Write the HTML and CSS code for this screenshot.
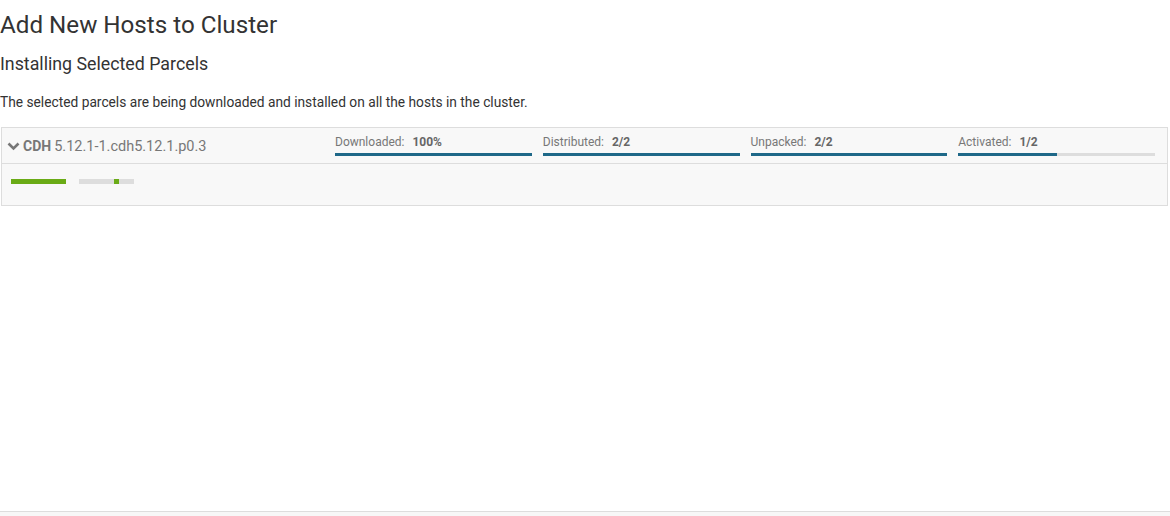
FILE: index.html
```html
<!DOCTYPE html>
<html>
<head>
<meta charset="utf-8">
<link rel="stylesheet" href="styles.css">
</head>
<body>
<div class="main">
  <h1 class="title">Add New Hosts to Cluster</h1>
  <h2 class="subtitle">Installing Selected Parcels</h2>
  <p class="desc">The selected parcels are being downloaded and installed on all the hosts in the cluster.</p>
  <div class="parcel">
    <div class="parcel-head">
      <div class="parcel-name">
        <svg class="chev" width="13" height="9" viewBox="0 0 13 9"><path d="M1.5 1.5 L6.5 6.5 L11.5 1.5" fill="none" stroke="#777" stroke-width="2.6"/></svg>
        <span class="pname">CDH</span><span class="pver">5.12.1-1.cdh5.12.1.p0.3</span>
      </div>
      <div class="stages">
        <div class="stage">
          <div class="stage-label">Downloaded:<b>100%</b></div>
          <div class="track"><div class="fill" style="width:100%"></div></div>
        </div>
        <div class="stage">
          <div class="stage-label">Distributed:<b>2/2</b></div>
          <div class="track"><div class="fill" style="width:100%"></div></div>
        </div>
        <div class="stage">
          <div class="stage-label">Unpacked:<b>2/2</b></div>
          <div class="track"><div class="fill" style="width:100%"></div></div>
        </div>
        <div class="stage">
          <div class="stage-label">Activated:<b>1/2</b></div>
          <div class="track"><div class="fill" style="width:50%"></div></div>
        </div>
      </div>
    </div>
    <div class="parcel-body">
      <div class="host-bar full"></div>
      <div class="host-bar partial"><span class="seg"></span></div>
    </div>
  </div>
</div>
<div class="footer"></div>
</body>
</html>
```
FILE: styles.css
```css
html, body {
  margin: 0;
  padding: 0;
}
body {
  font-family: Roboto, "Liberation Sans", sans-serif;
  color: #333;
  background: #fff;
}
.main {
  min-height: 511px;
  box-sizing: border-box;
  padding-top: 11px;
}
.title {
  font-size: 24.2px;
  font-weight: 400;
  line-height: 28px;
  margin: 0;
}
.subtitle {
  font-size: 17.8px;
  font-weight: 400;
  line-height: 21px;
  margin: 14px 0 0;
}
.desc {
  font-size: 13.75px;
  line-height: 16px;
  margin: 20px 0 0;
}
.parcel {
  margin: 17px 2px 0 1px;
  border: 1px solid #ddd;
  background: #f8f8f8;
}
.parcel-head {
  display: flex;
  height: 35px;
  border-bottom: 1px solid #ddd;
}
.parcel-name {
  width: 333px;
  display: flex;
  align-items: center;
  padding-left: 5px;
  box-sizing: border-box;
  font-size: 14px;
  color: #777;
  padding-top: 1px;
}
.chev {
  margin-right: 3px;
  margin-top: 1px;
}
.pname {
  font-weight: 700;
  margin-right: 3px;
}
.pver {
  font-size: 14.5px;
}
.stages {
  flex: 1;
  display: grid;
  grid-template-columns: repeat(4, 1fr);
  column-gap: 11px;
  padding-right: 12px;
  padding-top: 7px;
}
.stage-label {
  font-size: 12px;
  line-height: 14px;
  color: #777;
}
.stage-label b {
  color: #666;
  margin-left: 8px;
}
.track {
  margin-top: 4px;
  height: 3px;
  background: #ddd;
}
.fill {
  height: 3px;
  background: #1e6888;
}
.parcel-body {
  height: 41px;
  display: flex;
  align-items: flex-start;
  padding: 15px 0 0 9px;
  box-sizing: border-box;
  gap: 13px;
}
.host-bar {
  width: 55px;
  height: 5px;
  background: #ddd;
  position: relative;
}
.host-bar.full {
  background: #6aab16;
}
.seg {
  position: absolute;
  left: 35px;
  top: 0;
  width: 5px;
  height: 5px;
  background: #6aab16;
}
.footer {
  height: 60px;
  border-top: 1px solid #ddd;
  background: #f7f7f7;
}
```
